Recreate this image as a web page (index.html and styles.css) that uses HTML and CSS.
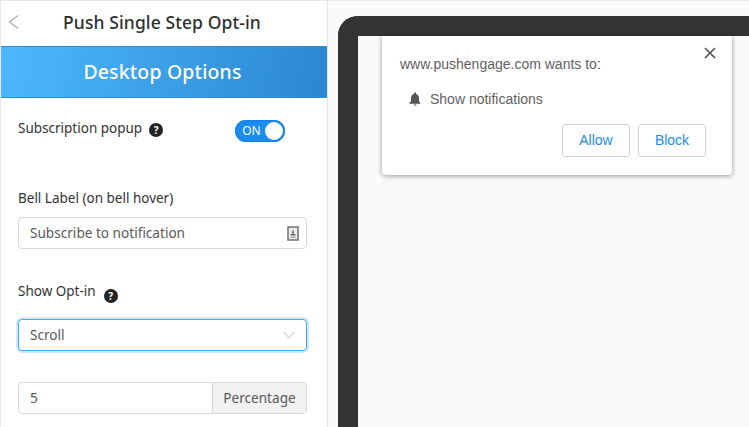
FILE: index.html
```html
<!DOCTYPE html>
<html lang="en">
<head>
<meta charset="utf-8">
<title>Push Single Step Opt-in</title>
<link rel="stylesheet" href="styles.css">
</head>
<body>
<div class="app">
  <aside class="panel">
    <header class="top">
      <svg class="back" width="12" height="16" viewBox="0 0 12 16"><path d="M10 1.500 1.500 8l8.500 6.500" fill="none" stroke="#a9a9a9" stroke-width="1.200"/></svg>
      <h1>Push Single Step Opt-in</h1>
    </header>
    <div class="banner">Desktop Options</div>
    <div class="form">
      <div class="row-toggle">
        <span class="lab">Subscription popup</span>
        <span class="help">?</span>
        <span class="toggle"><span class="on">ON</span><span class="knob"></span></span>
      </div>
      <div class="lab bell-lab">Bell Label (on bell hover)</div>
      <div class="field">
        <span class="val">Subscribe to notification</span>
        <svg width="12" height="15" viewBox="0 0 12 15"><rect x="1" y="1" width="10" height="13" fill="#ececec" stroke="#707070" stroke-width="1.500"/><path d="M6 3 4.800 7.500h2.400z" fill="#666"/><rect x="3.500" y="8" width="5" height="1.500" fill="#666"/><rect x="3.500" y="10.500" width="5" height="1.500" fill="#aaa"/></svg>
      </div>
      <div class="row-optin">
        <span class="lab">Show Opt-in</span>
        <span class="help">?</span>
      </div>
      <div class="field select">
        <span class="val">Scroll</span>
        <svg width="12" height="8" viewBox="0 0 12 8"><path d="M.7.800 6 6.800l5.300-6" fill="none" stroke="#bfbfbf" stroke-width="1"/></svg>
      </div>
      <div class="group">
        <span class="group-val">5</span>
        <span class="addon">Percentage</span>
      </div>
    </div>
  </aside>
  <main class="stage">
    <div class="device">
      <div class="popup">
        <svg class="close" width="12" height="12" viewBox="0 0 12 12"><path d="M1 1l10 10M11 1 1 11" stroke="#555" stroke-width="1.700"/></svg>
        <p class="site">www.pushengage.com wants to:</p>
        <p class="perm">
          <svg width="12" height="14" viewBox="0 0 12 14"><path d="M6 .500c.6 0 1 .4 1 1v.400c2 .5 3 2.100 3 4.100v3.500l1.500 1.500v.700H.500V10.500L2 9.500V6c0-2 1-3.600 3-4.100V1.500c0-.6.400-1 1-1zM4.500 12.600h3c0 .8-.7 1.200-1.500 1.200s-1.500-.4-1.500-1.200z" fill="#555"/></svg>
          <span>Show notifications</span>
        </p>
        <div class="actions">
          <span class="btn">Allow</span>
          <span class="btn">Block</span>
        </div>
      </div>
    </div>
  </main>
</div>
</body>
</html>
```
FILE: styles.css
```css
* { box-sizing: border-box; }
html, body { margin: 0; height: 100%; overflow: hidden; }
body { background: #fafafa; font-family: "Noto Sans", sans-serif; color: #333; }
.app { display: flex; height: 427px; border-top: 1px solid #e8e8e8; border-left: 1px solid #e8e8e8; }
.panel { width: 327px; flex: none; background: #fff; border-right: 1px solid #e4e4e4; height: 426px; overflow: hidden; }
.top { height: 45px; display: flex; align-items: center; justify-content: center; padding: 0 4px 4px 0; position: relative; }
.back { position: absolute; left: 7px; top: 13px; }
h1 { margin: 0; font-size: 17.500px; font-weight: 500; color: #2f2f2f; letter-spacing: .1px; }
.banner { height: 52px; line-height: 50px; text-align: center; padding-right: 3px; color: #fff; font-size: 19.400px; font-weight: 500; letter-spacing: .2px; background: linear-gradient(100deg, #4db8ff 0%, #2a87cf 100%); border-top: 1px solid #2f8fd6; border-bottom: 1px solid #2f8fd6; }
.form { padding: 0 20px 0 17px; }
.lab { font-size: 13.500px; color: #333; line-height: 16px; }
.row-toggle { display: flex; align-items: flex-start; height: 22px; margin-top: 22px; }
.help { width: 14px; height: 14px; flex: none; border-radius: 50%; background: #222; color: #fff; font-size: 10px; font-weight: 700; line-height: 14px; text-align: center; margin: 3px 0 0 7px; }
.toggle { width: 50px; height: 22px; border-radius: 11px; background: #1a8cf0; margin-left: 72px; display: flex; align-items: center; justify-content: space-between; padding: 0 2px 0 7px; box-shadow: inset 0 0 0 1px #1683e2; }
.on { color: #fff; font-size: 12px; line-height: 22px; }
.knob { width: 18px; height: 18px; border-radius: 50%; background: #fff; }
.bell-lab { margin-top: 48px; }
.field { height: 32px; margin-top: 11px; border: 1px solid #d9d9d9; border-radius: 4px; display: flex; align-items: center; justify-content: space-between; padding: 0 7px 0 11px; font-size: 13.600px; color: #595959; background: #fff; }
.val { line-height: 19px; padding-bottom: 1px; }
.row-optin { display: flex; align-items: flex-start; height: 22px; margin-top: 34px; }
.row-optin .help { margin: 6px 0 0 8px; }
.select { margin-top: 14px; border-color: #40a9ff; box-shadow: 0 0 0 2px rgba(24, 144, 255, .2); padding-right: 11px; }
.group { display: flex; height: 32px; margin-top: 31px; border: 1px solid #d9d9d9; border-radius: 4px; font-size: 13.600px; color: #595959; overflow: hidden; }
.group-val { flex: 1; padding-left: 11px; line-height: 30px; }
.addon { width: 94px; flex: none; background: #f1f1f1; border-left: 1px solid #d9d9d9; line-height: 30px; text-align: center; }
.stage { flex: 1; padding: 15px 0 0 10px; min-width: 0; }
.device { height: 420px; margin-right: -30px; border: 20px solid #333; border-bottom: 0; border-top-left-radius: 20px; background: #fafafa; padding-left: 24px; }
.popup { width: 350px; height: 139px; background: #fff; border-radius: 0 0 4px 4px; box-shadow: 0 1px 5px rgba(0, 0, 0, .4); padding: 19px 18px 0; position: relative; font-family: "Liberation Sans", Arial, sans-serif; color: #5f5f5f; font-size: 14px; }
.close { position: absolute; right: 16px; top: 11px; }
.site { margin: 0; line-height: 18px; }
.perm { margin: 17px 0 0 9px; display: flex; align-items: center; gap: 9px; line-height: 18px; }
.actions { display: flex; justify-content: flex-end; gap: 8px; margin-top: 16px; padding-right: 8px; }
.btn { width: 68px; height: 33px; border: 1px solid #d0d0d0; border-radius: 3px; color: #1a8cf0; text-align: center; line-height: 31px; }
```
